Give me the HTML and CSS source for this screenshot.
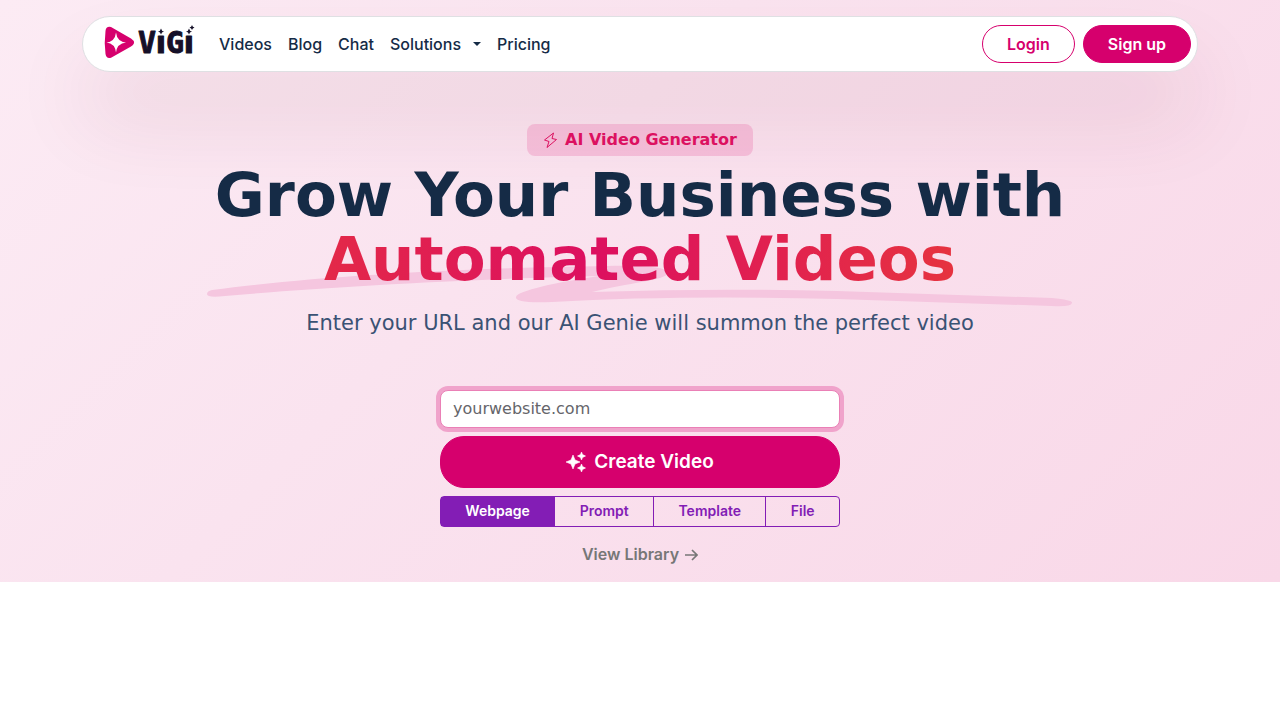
FILE: index.html
```html
<!DOCTYPE html>
<html lang="en">
<head>
    <meta charset="UTF-8">
    <meta name="viewport" content="width=device-width, initial-scale=1.0">
    <title>ViGi - AI Video Generator</title>
    <link rel="stylesheet" href="styles.css">
</head>
<body>
    <div class="hero">
        <header class="navbar">
            <a class="brand" href="#" aria-label="ViGi">
                <svg width="91" height="36" viewBox="0 0 91 36" aria-hidden="true">
                    <path fill="#d6006d" d="M1.500 7.000Q2 2 7 3L27 14.500Q33 18.500 27 22.500L7.500 33.500Q2.500 35.500 1.500 30Q0 18.500 1.500 7Z"/>
                    <path fill="#fff" d="M12 8.500Q13 17.500 22 18.500Q13 19.500 12 28.500Q11 19.500 2.500 18.500Q11 17.500 12 8.500Z"/>
                    <g class="wordmark">
                        <text class="capital" x="43" y="29">V</text>
                        <text x="57" y="29">ı</text>
                        <text class="capital" x="71" y="29">G</text>
                        <text x="85" y="29">ı</text>
                    </g>
                    <path fill="#151028" d="M57 4.500Q57.500 7 60 7.500Q57.500 8 57 10.500Q56.500 8 54 7.500Q56.500 7 57 4.500ZM85 4.500Q85.500 7 88 7.500Q85.500 8 85 10.500Q84.500 8 82 7.500Q84.500 7 85 4.500ZM88 1Q88.500 3 90.500 3.500Q88.500 4 88 6Q87.500 4 85.500 3.500Q87.500 3 88 1Z"/>
                </svg>
            </a>
            <nav class="nav-links">
                <a href="#">Videos</a>
                <a href="#">Blog</a>
                <a href="#">Chat</a>
                <a href="#" class="dropdown">Solutions</a>
                <a href="#">Pricing</a>
            </nav>
            <div class="nav-actions">
                <a href="#" class="btn btn-outline">Login</a>
                <a href="#" class="btn btn-primary">Sign up</a>
            </div>
        </header>

        <main class="content">
            <div class="badge">
                <svg width="16" height="16" viewBox="0 0 16 16" fill="none" stroke="currentColor" stroke-linejoin="round" aria-hidden="true">
                    <path d="M10.500 1L1.500 8L6 9.500L4 15.500L13.500 7.500L9 6.500Z"/>
                </svg>
                AI Video Generator
            </div>

            <h1>
                Grow Your Business with<br>
                <span class="highlight">
                    <svg class="swoosh" width="866" height="42" viewBox="0 0 866 42" aria-hidden="true">
                        <path d="M5 25C110 11 250 3 400 1C440 0 462 3 461 8C460 15 420 18 385 27Q510 23 630 26L845 33Q866 35 865 38Q864 42 845 41L630 34Q470 30 345 37C318 38 308 36 309 32C310 26 350 17 392 11C260 14 120 22 18 31Q0 33 0 29Q0 26 5 25Z"/>
                    </svg>
                    <span class="gradient-text">Automated Videos</span>
                </span>
            </h1>

            <p class="lead">Enter your URL and our AI Genie will summon the perfect video</p>

            <form class="create-form">
                <input type="text" class="url-input" placeholder="yourwebsite.com" aria-label="Website URL" autofocus>
                <button type="button" class="btn btn-primary btn-create">
                    <svg width="20" height="20" viewBox="0 0 20 20" fill="currentColor" aria-hidden="true">
                        <path d="M7 3L9 8L14 10L9 12L7 17L5 12L0 10L5 8ZM15.500 0L16.500 2.500L19.500 4L16.500 5.500L15.500 8L14.500 5.500L11.500 4L14.500 2.500ZM15.500 12L16.500 14.500L19.500 16L16.500 17.500L15.500 20L14.500 17.500L11.500 16L14.500 14.500Z" stroke="currentColor" stroke-width="0.6" stroke-linejoin="round"/>
                    </svg>
                    Create Video
                </button>
                <div class="btn-group">
                    <button type="button" class="active">Webpage</button>
                    <button type="button">Prompt</button>
                    <button type="button">Template</button>
                    <button type="button">File</button>
                </div>
            </form>

            <a href="#" class="library-link">View Library
                <svg width="13" height="14" viewBox="0 0 13 14" fill="none" stroke="currentColor" stroke-width="1.7" aria-hidden="true">
                    <path d="M0 8H11.500M7 3L12 8L7 13"/>
                </svg>
            </a>
        </main>
    </div>
</body>
</html>
```

FILE: styles.css
```css
* {
    box-sizing: border-box;
}

body {
    margin: 0;
    font-family: 'Inter', sans-serif;
    font-size: 16px;
    line-height: 24px;
    color: #152b46;
    background-color: #ffffff;
}

a {
    color: inherit;
    text-decoration: none;
}

.hero {
    padding: 16px 16px 0;
    background: linear-gradient(135deg, #fcebf4 0%, #fae3ef 40%, #f9d8e8 100%);
}

/* Navbar */
.navbar {
    display: flex;
    align-items: center;
    max-width: 1116px;
    height: 56px;
    margin: 0 auto;
    padding: 0 6px 0 21px;
    background-color: #ffffff;
    border: 1px solid #dfe0e3;
    border-radius: 28px;
    box-shadow: 0 48px 80px rgba(120, 40, 60, 0.11);
}

.brand {
    display: flex;
    margin-right: 16px;
}

.brand svg {
    margin-bottom: 4px;
}

.wordmark {
    font-family: 'DejaVu Sans', sans-serif;
    font-size: 30px;
    font-weight: bold;
    text-anchor: middle;
    fill: #151028;
    stroke: #151028;
    stroke-width: 1;
    stroke-linejoin: round;
}

.wordmark .capital {
    font-family: 'DejaVu Sans Mono', monospace;
}

.nav-links {
    display: flex;
    font-weight: 500;
}

.nav-links a {
    padding: 8px;
}

.dropdown::after {
    content: "";
    display: inline-block;
    margin-left: 12px;
    vertical-align: 4px;
    border-top: 4px solid;
    border-left: 4px solid transparent;
    border-right: 4px solid transparent;
}

.nav-actions {
    display: flex;
    gap: 8px;
    margin-left: auto;
}

.btn {
    padding: 6px 24px;
    font-family: inherit;
    font-size: 16px;
    font-weight: 600;
    line-height: 24px;
    border: 1px solid #d6006d;
    border-radius: 24px;
    cursor: pointer;
}

.btn-outline {
    color: #d6006d;
}

.btn-primary {
    color: #ffffff;
    background-color: #d6006d;
}

/* Hero content */
.content {
    display: flex;
    flex-direction: column;
    align-items: center;
    padding: 52px 0 16px;
    text-align: center;
}

.badge {
    display: flex;
    align-items: center;
    gap: 6px;
    padding: 4px 16px;
    font-family: 'DejaVu Sans', sans-serif;
    font-weight: bold;
    color: #dc1160;
    background-color: rgba(222, 10, 110, 0.16);
    border-radius: 8px;
}

h1 {
    margin: 7px 0 0;
    font-family: 'DejaVu Sans', sans-serif;
    font-size: 61px;
    line-height: 64px;
}

.highlight {
    position: relative;
    display: inline-block;
}

.swoosh {
    position: absolute;
    left: 50%;
    bottom: -16px;
    transform: translateX(-50%);
    fill: #f5c6df;
}

.gradient-text {
    position: relative;
    color: transparent;
    background: radial-gradient(circle at 42% 50%, #dc0f60 0%, #e6333f 100%);
    background-clip: text;
    -webkit-background-clip: text;
}

.lead {
    margin: 16px 0 0;
    font-family: 'DejaVu Sans', sans-serif;
    font-size: 21px;
    line-height: 32px;
    color: #3a5274;
}

.create-form {
    display: flex;
    flex-direction: column;
    gap: 8px;
    width: 100%;
    max-width: 400px;
    margin-top: 51px;
}

.url-input {
    width: 100%;
    padding: 6px 12px;
    font-family: 'DejaVu Sans', sans-serif;
    font-size: 16px;
    line-height: 24px;
    color: #212529;
    background-color: #ffffff;
    border: 1px solid #ea80b6;
    border-radius: 8px;
}

.url-input:focus {
    outline: none;
    box-shadow: 0 0 0 4px #f0a3cb;
}

.url-input::placeholder {
    color: #65656a;
}

.btn-create {
    display: flex;
    justify-content: center;
    align-items: center;
    gap: 8px;
    padding: 11px 24px;
    font-size: 19px;
    line-height: 28px;
}

.btn-group {
    display: flex;
    border: 1px solid #831db5;
    border-radius: 4px;
}

.btn-group button {
    flex: 1 1 auto;
    padding: 3px 24px 5px;
    font-family: inherit;
    font-size: 14px;
    font-weight: 600;
    line-height: 21px;
    color: #831db5;
    background-color: transparent;
    border: none;
    cursor: pointer;
}

.btn-group button + button {
    border-left: 1px solid #831db5;
}

.btn-group .active {
    color: #ffffff;
    background-color: #831db5;
}

.library-link {
    display: flex;
    align-items: center;
    gap: 6px;
    margin-top: 15px;
    font-weight: 600;
    color: #777777;
}
```
